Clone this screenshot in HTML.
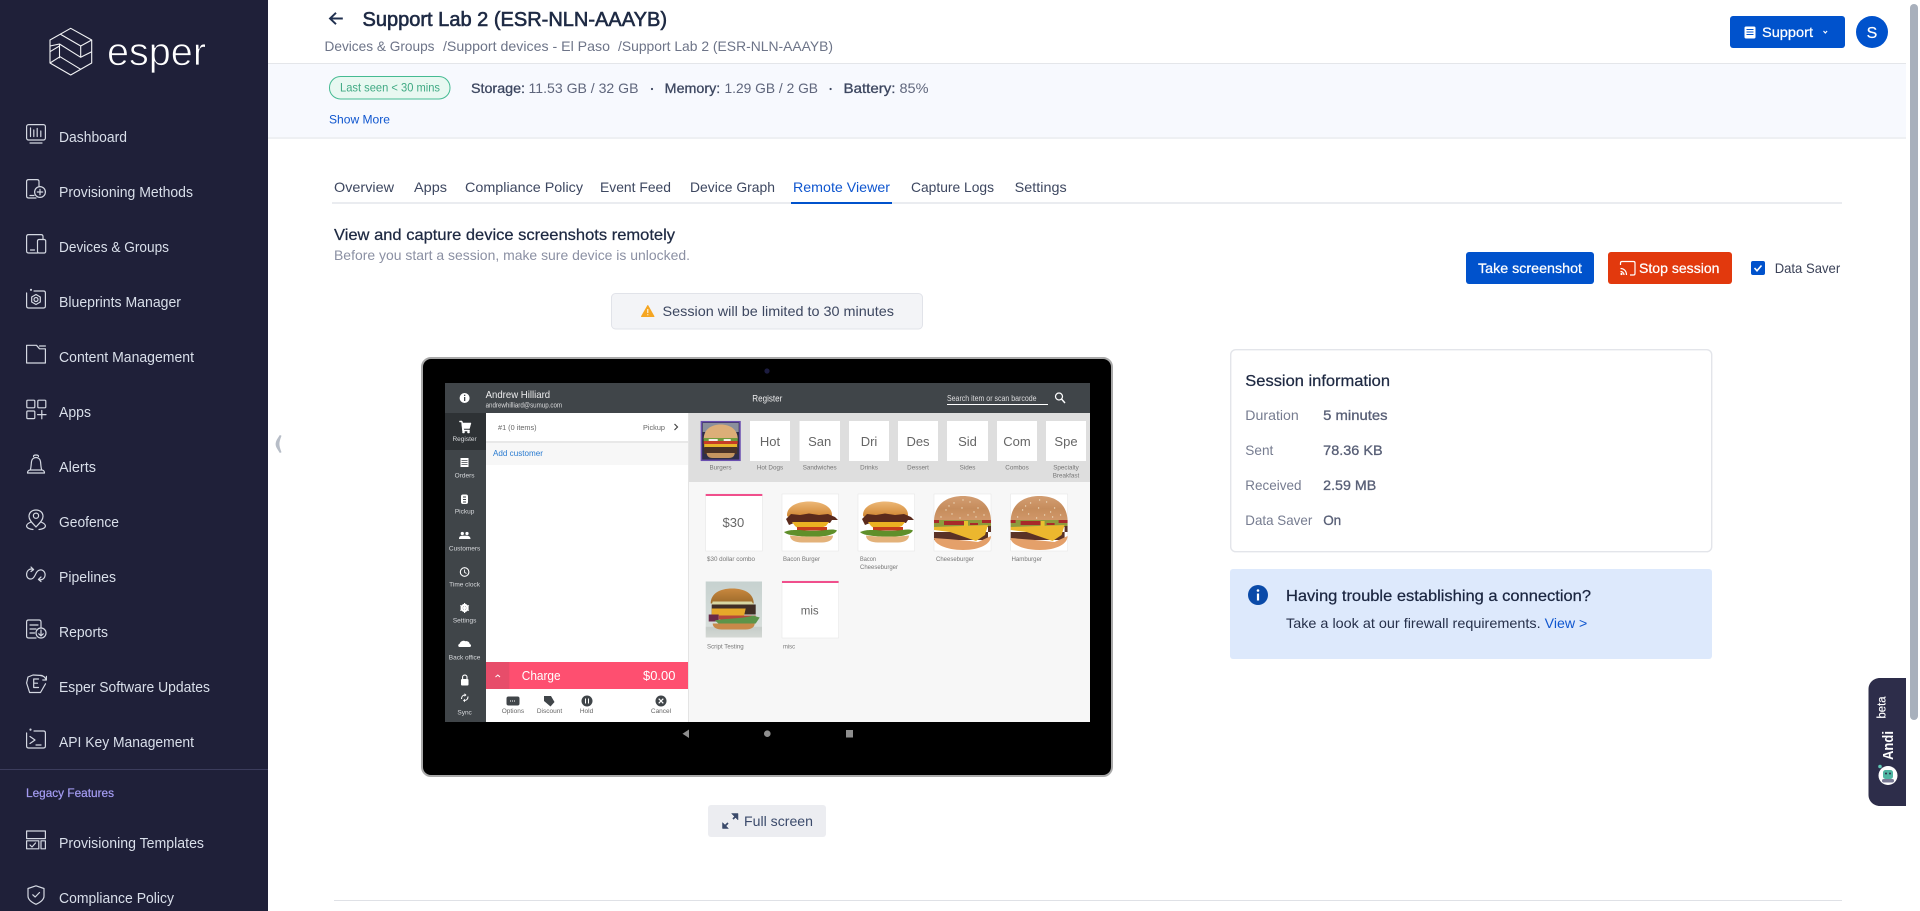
<!DOCTYPE html>
<html lang="en"><head><meta charset="utf-8"><title>Support Lab 2 - Remote Viewer</title>
<style>
html,body{margin:0;padding:0;background:#fff;width:1920px;height:911px;overflow:hidden}
svg{display:block}
text{font-family:"Liberation Sans",sans-serif;white-space:pre}
.nav{font-size:14.5px;fill:#d9dfea}
.ic{fill:none;stroke:#d4d8e2;stroke-width:1.2;stroke-linecap:round;stroke-linejoin:round}
.bc{font-size:14px;fill:#6d7488}
.tab{font-size:14px;fill:#3d4760}
.m{font-size:14px;fill:#3d4760;stroke:#3d4760;stroke-width:.3}
.r{font-size:14px;fill:#5f667c}
.lb{font-size:14px;fill:#767c90}
.v{font-size:14px;fill:#585f76;stroke:#585f76;stroke-width:.3}
.d{font-size:16px;fill:#1e2942;stroke:#1e2942;stroke-width:.25}
.w{fill:#fff;font-size:14px;stroke:#fff;stroke-width:.25}
.rl{font-size:6.5px;fill:#d8dadc;text-anchor:middle}
.ct{font-size:6.3px;fill:#777;text-anchor:middle}
.tt{font-size:13px;fill:#666;text-anchor:middle}
.cl{font-size:6.5px;fill:#777}
.bl{font-size:6.5px;fill:#666;text-anchor:middle}
</style></head><body>
<svg xmlns="http://www.w3.org/2000/svg" width="1920" height="911" viewBox="0 0 1920 911">
<defs>
<filter id="b" x="-2%" y="-2%" width="104%" height="104%"><feGaussianBlur stdDeviation="0.35"/></filter>
<linearGradient id="bun1" x1="0" y1="0" x2="0" y2="1"><stop offset="0" stop-color="#edb878"/><stop offset="1" stop-color="#cf8530"/></linearGradient>
<linearGradient id="bun2" x1="0" y1="0" x2="0" y2="1"><stop offset="0" stop-color="#d39e72"/><stop offset=".5" stop-color="#c58c5c"/><stop offset="1" stop-color="#d39a6c"/></linearGradient>
<linearGradient id="bun3" x1="0" y1="0" x2="0" y2="1"><stop offset="0" stop-color="#c9883e"/><stop offset="1" stop-color="#9c6a2a"/></linearGradient>
<linearGradient id="tb" x1="0" y1="0" x2="0" y2="1"><stop offset="0" stop-color="#c6d1cf"/><stop offset=".8" stop-color="#d7dedb"/><stop offset=".82" stop-color="#c6cdc9"/><stop offset="1" stop-color="#d4d8d4"/></linearGradient>
<symbol id="bacon" viewBox="0 0 57 57" width="57" height="57">
<path d="M5 21C5 12 16 7.5 27 7.5C39 7.5 50 12 50 21C50 22.500 49 23 47 23H8C6 23 5 22.500 5 21Z" fill="url(#bun1)"/>
<path d="M4 25L9 20L18 21L27 19.500L37 21L46 20L53 23L56 26L50 26L48 29L41 28L35 31L26 29L19 32L12 29L7 31L5 27Z" fill="#5a2a1c"/>
<path d="M10 28H47L44 32L36 35L24 34L17 35L13 32Z" fill="#ebb122"/>
<path d="M15 33H45V36.500H15Z" fill="#c53c1e"/>
<path d="M2 38C8 35.500 12 36 18 36C26 37 36 37 44 36C48 35.500 52 35 55 36.500C53 40 50 40 46 41.500C40 43 20 43 12 41.500C8 41 4 40 2 38Z" fill="#5f8f2c"/>
<path d="M8 41.500C18 43 40 43 51 41.500C51 46 46 48.500 40 48.500H20C13 48.500 8 46 8 41.500Z" fill="#e3b27a"/>
</symbol>
<symbol id="cheese" viewBox="0 0 57 57" width="57" height="57">
<path d="M0 28C0 10 13 2 29 2C45 2 57 10 57 28Z" fill="url(#bun2)"/>
<g fill="#ecd9bc"><circle cx="12" cy="16" r=".7"/><circle cx="20" cy="9" r=".7"/><circle cx="28" cy="14" r=".7"/><circle cx="36" cy="8" r=".7"/><circle cx="44" cy="14" r=".7"/><circle cx="50" cy="21" r=".7"/><circle cx="18" cy="20" r=".7"/><circle cx="34" cy="21" r=".7"/><circle cx="7" cy="23" r=".7"/><circle cx="26" cy="24" r=".7"/><circle cx="42" cy="23" r=".7"/><circle cx="15" cy="12" r=".7"/><circle cx="29" cy="6" r=".7"/><circle cx="40" cy="18" r=".7"/></g>
<path d="M0 26H57V33H0Z" fill="#8e9a3c"/><path d="M0 26H5V29H0ZM10 27H30V31H10ZM36 29H44V31H36ZM48 26H57V29H48Z" fill="#a82c2c"/><path d="M30 27H34V32H30Z" fill="#e9c02e"/>
<path d="M0 38H57V32L54 32V46H0Z" fill="#5a3328"/>
<path d="M0 33L54 31L51 41L42 47L16 38L0 36Z" fill="#ecb72d"/>
<path d="M0 44C12 45 28 46 44 48L57 42C57 50 46 56 29 56C12 56 0 50 0 44Z" fill="#e4a06a"/>
</symbol>
</defs>

<!-- main backgrounds -->
<rect width="1920" height="911" fill="#fff"/>
<rect x="268" y="63" width="1638" height="1.5" fill="#e4e6ea"/>
<rect x="268" y="64" width="1638" height="74" fill="#f7f9fe"/>
<rect x="268" y="137" width="1638" height="2" fill="#eef0f3"/>

<!-- sidebar -->
<rect width="268" height="911" fill="#1f2039"/>
<g fill="none" stroke="#f2f3f5" stroke-width="1.1" stroke-linejoin="round">
<path d="M70.7 28.3L91.7 40V63L70.7 75L50 63V40Z"/>
<path d="M60 34L80.7 46L91.7 40M80.7 46V57.3M50 46L59.5 44L80.7 57.3L91.7 51.7M50 51.7L59.5 46M59.5 44V58.3M50 63L60 56.7L80.7 69.3"/>
</g>
<text x="107" y="65" font-size="39" fill="#fff" stroke="#1f2039" stroke-width=".8" textLength="99" lengthAdjust="spacingAndGlyphs">esper</text>

<g class="nav">
<text x="59" y="142" textLength="68" lengthAdjust="spacingAndGlyphs">Dashboard</text>
<text x="59" y="197" textLength="134" lengthAdjust="spacingAndGlyphs">Provisioning Methods</text>
<text x="59" y="252" textLength="110" lengthAdjust="spacingAndGlyphs">Devices &amp; Groups</text>
<text x="59" y="307" textLength="122" lengthAdjust="spacingAndGlyphs">Blueprints Manager</text>
<text x="59" y="362" textLength="135" lengthAdjust="spacingAndGlyphs">Content Management</text>
<text x="59" y="417" textLength="32" lengthAdjust="spacingAndGlyphs">Apps</text>
<text x="59" y="472" textLength="37" lengthAdjust="spacingAndGlyphs">Alerts</text>
<text x="59" y="527" textLength="60" lengthAdjust="spacingAndGlyphs">Geofence</text>
<text x="59" y="582" textLength="57" lengthAdjust="spacingAndGlyphs">Pipelines</text>
<text x="59" y="637" textLength="49" lengthAdjust="spacingAndGlyphs">Reports</text>
<text x="59" y="692" textLength="151" lengthAdjust="spacingAndGlyphs">Esper Software Updates</text>
<text x="59" y="747" textLength="135" lengthAdjust="spacingAndGlyphs">API Key Management</text>
<text x="59" y="848" textLength="145" lengthAdjust="spacingAndGlyphs">Provisioning Templates</text>
<text x="59" y="903" textLength="115" lengthAdjust="spacingAndGlyphs">Compliance Policy</text>
</g>
<rect x="0" y="769" width="268" height="1" fill="#3b3c5c"/>
<text x="26" y="797" font-size="12" fill="#a59df3" stroke="#a59df3" stroke-width=".2" textLength="88" lengthAdjust="spacingAndGlyphs">Legacy Features</text>

<g class="ic">
<!-- dashboard -->
<rect x="26.6" y="124.6" width="18.8" height="15.4" rx="2"/><path d="M30.5 128V136.5M33.8 130V136.5M37.2 128.5V136.5M40.8 131V136.5M30 143H42"/>
<!-- provisioning -->
<path d="M39 186V181.5C39 180.4 38.2 179.6 37 179.6H28.6C27.4 179.6 26.6 180.4 26.6 181.5V196C26.6 197.2 27.4 198 28.6 198H36M30 179.6H35M30 195.5H34"/><circle cx="40" cy="192" r="5.4"/><path d="M40 189.3V194.7M37.3 192H42.7"/>
<!-- devices -->
<path d="M37.5 253H28.6C27.4 253 26.6 252.2 26.6 251V236.6C26.6 235.4 27.4 234.6 28.6 234.6H41C42.2 234.6 43 235.4 43 236.6V239.5"/><rect x="37.5" y="239.5" width="8.2" height="13.5" rx="1.5"/><path d="M30.5 250H34.5"/>
<!-- blueprints -->
<path d="M34 291H43.5C44.7 291 45.4 291.8 45.4 293V306C45.4 307.2 44.7 308 43.5 308H28.5C27.3 308 26.6 307.2 26.6 306V293"/><circle cx="36" cy="299.5" r="2"/><path d="M36 294.5L40.3 297V302L36 304.5L31.7 302V297Z"/><circle cx="31" cy="289.8" r=".5"/>
<!-- content -->
<path d="M26.6 345.3H36.5L39.5 348.8H45.4V363H26.6ZM39.5 346H45.4"/>
<!-- apps -->
<rect x="26.8" y="400.2" width="8" height="7.6" rx="1"/><rect x="37.8" y="400.2" width="8" height="7.6" rx="1"/><rect x="26.8" y="411" width="8" height="7.6" rx="1"/><path d="M41.8 410.5V418.8M37.6 414.6H46"/>
<!-- alerts -->
<path d="M30.3 470C31.2 467 31.2 463.5 31.5 461.500C31.8 459 33.8 457.5 36 457.5C38.2 457.5 40.2 459 40.5 461.5C40.8 463.5 40.8 467 41.7 470M27.500 473C27.500 471 29 470 30.3 470H41.7C43 470 44.500 471 44.500 473ZM33.5 456.5C33.5 454.5 38.5 454.5 38.5 456.5"/>
<!-- geofence -->
<path d="M36 527C33.5 524 29 520.5 29 516.5C29 512.5 32 510 36 510C40 510 43 512.5 43 516.5C43 520.5 38.5 524 36 527Z"/><circle cx="36" cy="515.7" r="2.6"/><path d="M31 522C28.5 523 26.6 524.5 26.6 526C26.6 528 30 529.3 33 529.5M41 522C43.5 523 45.4 524.5 45.4 526C45.4 528 42 529.3 39 529.5"/>
<!-- pipelines -->
<path d="M33 569.5C30 568 26.6 570.5 26.6 574.5C26.6 578 29.5 580 32.5 578.5C34.5 577.5 35.5 574 36.5 572.5C38 570 41 569.2 43 570.6C45.8 572.5 45.8 577 43 579C41.5 580 40 580 38.8 579.3M31 567L33.6 569.6L31 571.5M41 577L38.4 579.4L41 581.6"/>
<!-- reports -->
<path d="M36 638H28.6C27.4 638 26.6 637.2 26.6 636V622C26.6 620.8 27.4 620 28.6 620H39C40.2 620 41 620.8 41 622V627.6M30 625H38M30 629H36M30 633H34.5"/><circle cx="41" cy="633" r="5"/><path d="M41 630V635.8M38.8 633.8L41 636L43.2 633.8"/>
<!-- esper updates -->
<path d="M42 675.5L33 675L28 677L26.6 683L29.6 692.5H40.5L45.5 683.8"/><path d="M33.7 679H38.5M33.7 683.2H37.5M33.7 687.5H38.5M33.7 679V687.5"/><path d="M40.5 675.5C43 675.7 45 677 46 679.5M46.4 676.3V680H42.8"/>
<!-- api -->
<path d="M34 731H43.5C44.7 731 45.4 731.8 45.4 733V746C45.4 747.2 44.7 748 43.5 748H28.5C27.3 748 26.6 747.2 26.6 746V733"/><path d="M30 736.5L35 740L30 743.5M36 745H41"/><circle cx="30.5" cy="729.6" r=".5"/>
<!-- templates -->
<rect x="26.6" y="831" width="18.8" height="7.6"/><rect x="26.6" y="840.8" width="12.2" height="8"/><rect x="41" y="840.8" width="4.4" height="8"/><path d="M30 845L32 847L35.5 843"/>
<!-- compliance -->
<path d="M36 885.8L44 888.5V896C44 899.5 40 902.5 36 904.3C32 902.5 28 899.5 28 896V888.5Z"/><path d="M32.8 894.8L35.2 897L39.5 892.5"/>
</g>

<!-- collapse handle -->
<path d="M280 435.5C277 440 276 441.5 276 444C276 446.5 277 448 280 452.5L281 452C279.6 448.5 279 446.5 279 444C279 441.5 279.6 439.5 281 436Z" fill="#b7bdc7" stroke="#b7bdc7" stroke-width=".8"/>

<!-- header -->
<g fill="none" stroke="#20304f" stroke-width="1.9"><path d="M342.8 18.5H330.5M336 12.8L330 18.5L336 24.2"/></g>
<text x="362.5" y="26" font-size="20" fill="#1e2a44" stroke="#1e2a44" stroke-width=".6" textLength="304.5" lengthAdjust="spacingAndGlyphs">Support Lab 2 (ESR-NLN-AAAYB)</text>
<text x="324.5" y="51" class="bc" textLength="110" lengthAdjust="spacingAndGlyphs">Devices &amp; Groups</text>
<text x="443" y="51" class="bc" textLength="167" lengthAdjust="spacingAndGlyphs">/Support devices - El Paso</text>
<text x="618" y="51" class="bc" textLength="215" lengthAdjust="spacingAndGlyphs">/Support Lab 2 (ESR-NLN-AAAYB)</text>

<rect x="1730" y="16" width="115" height="32" rx="3" fill="#0052cc"/>
<rect x="1744.5" y="26.5" width="11" height="12" rx="1.5" fill="#fff"/><path d="M1746.5 29.5H1753.5M1746.5 32H1753.5M1746.5 34.5H1753.5" stroke="#0052cc" stroke-width="1"/>
<text x="1762" y="37" class="w" textLength="51" lengthAdjust="spacingAndGlyphs">Support</text>
<path d="M1823.5 31L1825.3 33L1827.1 31" fill="none" stroke="#fff" stroke-width="1.1"/>
<circle cx="1872" cy="32" r="16" fill="#0052cc"/>
<text x="1872" y="38" font-size="16" fill="#fff" text-anchor="middle" stroke="#fff" stroke-width=".2">S</text>

<!-- scrollbar -->
<rect x="1910" y="4" width="8" height="716" rx="4" fill="#a8b0bc"/>

<!-- status strip -->
<rect x="329.5" y="76.5" width="120.5" height="22.5" rx="11" fill="#e8f8f1" stroke="#45bb92" stroke-width="1"/>
<text x="340" y="91.5" font-size="12" fill="#3fa983" textLength="100" lengthAdjust="spacingAndGlyphs">Last seen &lt; 30 mins</text>
<text x="471" y="93" class="m" textLength="54" lengthAdjust="spacingAndGlyphs">Storage:</text>
<text x="528.5" y="93" class="r" textLength="110" lengthAdjust="spacingAndGlyphs">11.53 GB / 32 GB</text>
<circle cx="652" cy="89" r="1.1" fill="#3d4760"/>
<text x="664.7" y="93" class="m" textLength="55.5" lengthAdjust="spacingAndGlyphs">Memory:</text>
<text x="724.5" y="93" class="r" textLength="93.5" lengthAdjust="spacingAndGlyphs">1.29 GB / 2 GB</text>
<circle cx="830.6" cy="89" r="1.1" fill="#3d4760"/>
<text x="843.5" y="93" class="m" textLength="52" lengthAdjust="spacingAndGlyphs">Battery:</text>
<text x="899.5" y="93" class="r" textLength="29" lengthAdjust="spacingAndGlyphs">85%</text>
<text x="329" y="123.5" font-size="12" fill="#0f56cf" textLength="61" lengthAdjust="spacingAndGlyphs">Show More</text>

<!-- tabs -->
<text x="334" y="192" class="tab" textLength="60" lengthAdjust="spacingAndGlyphs">Overview</text>
<text x="414" y="192" class="tab" textLength="33" lengthAdjust="spacingAndGlyphs">Apps</text>
<text x="465" y="192" class="tab" textLength="118" lengthAdjust="spacingAndGlyphs">Compliance Policy</text>
<text x="600" y="192" class="tab" textLength="71" lengthAdjust="spacingAndGlyphs">Event Feed</text>
<text x="690" y="192" class="tab" textLength="85" lengthAdjust="spacingAndGlyphs">Device Graph</text>
<text x="793" y="192" class="tab" style="fill:#0f56cf" textLength="97" lengthAdjust="spacingAndGlyphs">Remote Viewer</text>
<text x="911" y="192" class="tab" textLength="83" lengthAdjust="spacingAndGlyphs">Capture Logs</text>
<text x="1014.7" y="192" class="tab" textLength="52" lengthAdjust="spacingAndGlyphs">Settings</text>
<rect x="332" y="202" width="1510" height="2" fill="#eaecf0"/>
<rect x="791" y="202" width="101" height="2" fill="#0052cc"/>

<!-- headings -->
<text x="334" y="240" class="d" textLength="341" lengthAdjust="spacingAndGlyphs">View and capture device screenshots remotely</text>
<text x="334" y="260" font-size="14" fill="#8b90a3" textLength="356" lengthAdjust="spacingAndGlyphs">Before you start a session, make sure device is unlocked.</text>

<!-- action buttons -->
<rect x="1466" y="252" width="128" height="32" rx="3" fill="#0052cc"/>
<text x="1478" y="273" class="w" textLength="104" lengthAdjust="spacingAndGlyphs">Take screenshot</text>
<rect x="1608" y="252" width="124" height="32" rx="3" fill="#e2390d"/>
<g fill="none" stroke="#fff" stroke-width="1.2"><path d="M1620.5 265V263C1620.5 262 1621 261.5 1622 261.5H1633.5C1634.5 261.5 1635 262 1635 263V273.5C1635 274.5 1634.5 275 1633.5 275H1630"/><path d="M1620.5 268.5C1624 268.5 1626.5 271 1626.5 275M1620.5 271.5C1622.5 271.5 1624 273 1624 275"/></g><circle cx="1621.5" cy="274" r="1.1" fill="#fff"/>
<text x="1639" y="273" class="w" textLength="80.5" lengthAdjust="spacingAndGlyphs">Stop session</text>
<rect x="1751" y="261" width="14" height="14" rx="2" fill="#0052cc"/>
<path d="M1754.5 268L1757 270.8L1761.5 265.5" fill="none" stroke="#fff" stroke-width="1.6"/>
<text x="1774.7" y="273" font-size="14" fill="#3b4258" textLength="65.5" lengthAdjust="spacingAndGlyphs">Data Saver</text>

<!-- warning -->
<rect x="611.5" y="293.5" width="311" height="35.5" rx="4" fill="#f3f4f7" stroke="#e1e3e9"/>
<path d="M647.8 305.5L654 316.5H641.5Z" fill="#f5a623" stroke="#f5a623" stroke-linejoin="round"/><path d="M647.8 309V313M647.8 314.3V315.3" stroke="#fff" stroke-width="1"/>
<text x="662.5" y="316" font-size="14" fill="#3d4760" textLength="231.5" lengthAdjust="spacingAndGlyphs">Session will be limited to 30 minutes</text>

<!-- tablet -->
<rect x="422" y="358" width="690" height="418" rx="9" fill="#000" stroke="#a9a9a9" stroke-width="2"/>
<g filter="url(#b)">
<circle cx="767" cy="371" r="2.6" fill="#1c1c40"/>
<path d="M689 729.5V738L682.5 733.7Z" fill="#8e8e8e"/>
<circle cx="767.3" cy="733.7" r="3.3" fill="#8e8e8e"/>
<rect x="846" y="730" width="7" height="7.5" fill="#8e8e8e"/>

<!-- app -->
<rect x="445" y="383" width="645" height="339" fill="#f7f7f7"/>
<rect x="445" y="383" width="645" height="30" fill="#3f444a"/>
<circle cx="464.6" cy="398" r="5" fill="#fff"/><rect x="464" y="397" width="1.3" height="4" fill="#3f444a"/><rect x="464" y="394.7" width="1.3" height="1.3" fill="#3f444a"/>
<text x="485.6" y="398" font-size="10.5" fill="#eee" textLength="64.5" lengthAdjust="spacingAndGlyphs">Andrew Hilliard</text>
<text x="485.6" y="407.5" font-size="7" fill="#ddd" textLength="76.5" lengthAdjust="spacingAndGlyphs">andrewhilliard@sumup.com</text>
<text x="767.3" y="401.5" font-size="9" fill="#eee" text-anchor="middle" textLength="30" lengthAdjust="spacingAndGlyphs">Register</text>
<text x="947" y="401" font-size="8" fill="#ddd" textLength="89.5" lengthAdjust="spacingAndGlyphs">Search item or scan barcode</text>
<rect x="947" y="404" width="101" height="1" fill="#fff"/>
<circle cx="1059" cy="396.5" r="3.5" fill="none" stroke="#fff" stroke-width="1.2"/><path d="M1061.5 399L1065 403" stroke="#fff" stroke-width="1.4"/>

<!-- rail -->
<rect x="445" y="413" width="41" height="309" fill="#3f444a"/>
<rect x="445" y="413" width="41" height="37" fill="#2e3236"/>
<path d="M459.5 421H462L462.8 423H471L469.5 428.5H463.5L464 430H469.5V431H462.5L461.5 422H459.5Z" fill="#fff" stroke="#fff" stroke-width=".5"/><circle cx="463.5" cy="432" r="1.3" fill="#fff"/><circle cx="468.5" cy="432" r="1.3" fill="#fff"/>
<text x="464.6" y="441" class="rl">Register</text>
<rect x="460.5" y="458" width="8" height="9" fill="#fff"/><path d="M461.5 460.5H467.5M461.5 462.5H467.5M461.5 464.5H467.5" stroke="#3f444a" stroke-width=".7"/>
<text x="464.6" y="477.5" class="rl">Orders</text>
<rect x="461" y="494.5" width="7" height="9.5" rx="2" fill="#fff"/><path d="M463 497H466M463 499.5H466M463 502H466" stroke="#3f444a" stroke-width=".9"/>
<text x="464.6" y="513.5" class="rl">Pickup</text>
<circle cx="462.3" cy="533.5" r="1.6" fill="#fff"/><circle cx="467" cy="533.5" r="1.6" fill="#fff"/><path d="M459 539C459 536 461 535.8 462.3 535.8C464 535.8 466 535.8 467 535.8C469 535.8 470.5 537 470.5 539Z" fill="#fff"/>
<text x="464.6" y="550.5" class="rl">Customers</text>
<circle cx="464.6" cy="572" r="4.3" fill="none" stroke="#fff" stroke-width="1.1"/><path d="M464.6 569.5V572.4L466.5 573.5" fill="none" stroke="#fff" stroke-width=".9"/>
<text x="464.6" y="586.5" class="rl">Time clock</text>
<circle cx="464.6" cy="608" r="3" fill="none" stroke="#fff" stroke-width="2.2"/><path d="M464.6 603V613M460.3 605.5L468.9 610.5M460.3 610.5L468.9 605.5" stroke="#fff" stroke-width="1.2"/>
<text x="464.6" y="622.5" class="rl">Settings</text>
<path d="M459.5 647C457.8 647 457.8 644 459.8 643.6C460.4 641.2 463.5 640 465.5 641.3C467 640.7 469.7 642 469.7 644C471.5 644.3 471.5 647 469.7 647Z" fill="#fff"/>
<text x="464.6" y="659.5" class="rl">Back office</text>
<rect x="461" y="679" width="7.5" height="6.5" rx="1" fill="#fff"/><path d="M462.6 679V677C462.6 674.4 467 674.4 467 677V679" fill="none" stroke="#fff" stroke-width="1.1"/>
<path d="M461.5 699C461.5 696.5 463 695 465 695M468 696.5C468 699 466.5 700.5 464.5 700.5" fill="none" stroke="#fff" stroke-width="1.1"/><path d="M464.5 693.3V696.7L466.5 695ZM465 698.8V702.2L463 700.5Z" fill="#fff"/>
<text x="464.6" y="714.5" class="rl">Sync</text>

<!-- middle panel -->
<rect x="486" y="413" width="202" height="309" fill="#fff"/>
<rect x="486" y="441" width="202" height="2" fill="#e8e8e8"/>
<rect x="486" y="443" width="202" height="22" fill="#f7f7f7"/>
<text x="498" y="430" font-size="7" fill="#666" textLength="38.6" lengthAdjust="spacingAndGlyphs">#1 (0 items)</text>
<text x="643" y="430" font-size="7.5" fill="#666" textLength="22" lengthAdjust="spacingAndGlyphs">Pickup</text>
<path d="M674.5 424L677.5 427L674.5 430" fill="none" stroke="#444" stroke-width="1.2"/>
<text x="493" y="456" font-size="8.5" fill="#2a7bd0" textLength="50" lengthAdjust="spacingAndGlyphs">Add customer</text>
<rect x="486" y="662" width="202" height="27" fill="#fe5070"/>
<rect x="486" y="662" width="23.3" height="27" fill="#e74d6b"/>
<path d="M495.5 677L497.8 675L500 677" fill="none" stroke="#fff" stroke-width="1"/>
<text x="521.8" y="680" font-size="12.5" fill="#fff" textLength="38.8" lengthAdjust="spacingAndGlyphs">Charge</text>
<text x="643" y="680" font-size="12.5" fill="#fff" textLength="32.4" lengthAdjust="spacingAndGlyphs">$0.00</text>
<rect x="506.5" y="696.5" width="13" height="9" rx="2" fill="#3f444a"/><path d="M510 701H516" stroke="#fff" stroke-width="1" stroke-dasharray="1 1"/>
<path d="M544 696L551 696L554.5 702L550.5 706.5L544 701Z" fill="#3f444a"/>
<circle cx="587" cy="701" r="5.5" fill="#3f444a"/><path d="M585.5 698.5V703.5M588.5 698.5V703.5" stroke="#fff" stroke-width="1"/>
<circle cx="661" cy="701" r="5.5" fill="#3f444a"/><path d="M658.7 698.7L663.3 703.3M663.3 698.7L658.7 703.3" stroke="#fff" stroke-width="1.2"/>
<text x="512.9" y="713" class="bl">Options</text><text x="549.5" y="713" class="bl">Discount</text><text x="586.5" y="713" class="bl">Hold</text><text x="661" y="713" class="bl">Cancel</text>
<rect x="688" y="413" width="1" height="309" fill="#e4e4e4"/>

<!-- categories -->
<rect x="689" y="413" width="401" height="69" fill="#dedede"/>
<g transform="translate(700.7 421)">
<rect x=".7" y=".7" width="38.6" height="38.6" fill="#2f2e48" stroke="#6a4fb0" stroke-width="1.5"/>
<rect x="2" y="2" width="36" height="9" fill="#8a8f9c"/>
<path d="M3 18C3 8 11 3.500 20 3.500C29 3.500 37 8 37 18Z" fill="#dcae78"/>
<path d="M3 17H37V20H3Z" fill="#6f9c3e"/><path d="M8 18H17V20H8ZM23 18H30V20H23Z" fill="#f2f2ea"/>
<path d="M3 20H37V23H3Z" fill="#c63d28"/>
<path d="M3.500 23H36.500V27L26 28L10 27H3.500Z" fill="#e9b52a"/>
<path d="M3.500 26H36.500V33H3.500Z" fill="#4a3228"/>
<path d="M6 32H34C34 35 32 37 28 37H12C8 37 6 35 6 32Z" fill="#c49560"/>
</g>
<g fill="#fff"><rect x="750" y="421" width="40" height="40"/><rect x="799.5" y="421" width="40.5" height="40"/><rect x="849" y="421" width="40" height="40"/><rect x="898" y="421" width="40" height="40"/><rect x="947" y="421" width="41" height="40"/><rect x="997" y="421" width="40" height="40"/><rect x="1046" y="421" width="40" height="40"/></g>
<text x="770" y="446" class="tt">Hot</text><text x="819.7" y="446" class="tt">San</text><text x="869" y="446" class="tt">Dri</text><text x="918" y="446" class="tt">Des</text><text x="967.5" y="446" class="tt">Sid</text><text x="1017" y="446" class="tt">Com</text><text x="1066" y="446" class="tt">Spe</text>
<text x="720.5" y="469.5" class="ct">Burgers</text><text x="770" y="469.5" class="ct">Hot Dogs</text><text x="819.7" y="469.5" class="ct">Sandwiches</text><text x="869" y="469.5" class="ct">Drinks</text><text x="918" y="469.5" class="ct">Dessert</text><text x="967.5" y="469.5" class="ct">Sides</text><text x="1017" y="469.5" class="ct">Combos</text><text x="1066" y="469.5" class="ct">Specialty</text><text x="1066" y="477.5" class="ct">Breakfast</text>

<!-- cards -->
<g fill="#fff" stroke="#e8e8e8" stroke-width=".6">
<rect x="705.7" y="494" width="56.6" height="57"/><rect x="782" y="494" width="56.6" height="57"/><rect x="858" y="494" width="56.6" height="57"/><rect x="782" y="581" width="56.6" height="57"/>
</g>
<rect x="705.7" y="494" width="56.6" height="2" fill="#f04f8c"/><rect x="782" y="581" width="56.6" height="2" fill="#f04f8c"/>
<text x="733.4" y="527" font-size="13" fill="#666" text-anchor="middle">$30</text>
<use href="#bacon" x="782" y="494"/><use href="#bacon" x="858" y="494"/>
<rect x="934" y="494" width="57" height="57" fill="#fff" stroke="#e8e8e8" stroke-width=".6"/><rect x="1010.600" y="494" width="57" height="57" fill="#fff" stroke="#e8e8e8" stroke-width=".6"/>
<use href="#cheese" x="934" y="494"/><use href="#cheese" x="1010.6" y="494"/>
<text x="809.7" y="614.5" font-size="11.5" fill="#666" text-anchor="middle">mis</text>
<g transform="translate(705.7 581.5)">
<rect width="56.3" height="56" fill="url(#tb)"/>
<path d="M5 22C5 12 14 7 26.500 7C39 7 48 12 48 22Z" fill="url(#bun3)"/>
<path d="M7 20H46L48 23H6Z" fill="#d8d6a2"/>
<path d="M6 23H50V33H6Z" fill="#3f2d28"/>
<path d="M6 27H40L38 36H22L6 33Z" fill="#e6a82c"/>
<path d="M3 33H13V40H3Z" fill="#6b2a4a"/>
<path d="M13 34H50V38H13Z" fill="#b54a3a"/>
<path d="M9 39C18 37 40 37 47 34L54 36L50 42L34 43H14Z" fill="#5c9448"/>
<path d="M7 42H49C49 46 45 48 40 48H16C11 48 7 46 7 42Z" fill="#c8894a"/>
</g>
<text x="707" y="561" class="cl" textLength="48" lengthAdjust="spacingAndGlyphs">$30 dollar combo</text>
<text x="783" y="561" class="cl" textLength="37" lengthAdjust="spacingAndGlyphs">Bacon Burger</text>
<text x="860" y="561" class="cl" textLength="16" lengthAdjust="spacingAndGlyphs">Bacon</text>
<text x="860" y="569" class="cl" textLength="38" lengthAdjust="spacingAndGlyphs">Cheeseburger</text>
<text x="936" y="561" class="cl" textLength="38" lengthAdjust="spacingAndGlyphs">Cheeseburger</text>
<text x="1011.5" y="561" class="cl" textLength="30.5" lengthAdjust="spacingAndGlyphs">Hamburger</text>
<text x="707" y="648.5" class="cl" textLength="36.7" lengthAdjust="spacingAndGlyphs">Script Testing</text>
<text x="783" y="648.5" class="cl" textLength="12" lengthAdjust="spacingAndGlyphs">misc</text>
</g>

<!-- full screen -->
<rect x="708" y="805" width="118" height="32" rx="3" fill="#ecedf1"/>
<g fill="#3b4a6b" stroke="#3b4a6b"><path d="M723 828L728 823M733 819L737.500 814.500" stroke-width="1.700" fill="none"/><path d="M722.500 822.500V828.500H728.500ZM731.500 813.500H738V820Z" stroke-width=".5"/></g>
<text x="744" y="826" font-size="14" fill="#3b4a6b" textLength="69" lengthAdjust="spacingAndGlyphs">Full screen</text>

<!-- session card -->
<rect x="1230.7" y="349.7" width="481" height="202" rx="5" fill="#fff" stroke="#e3e5ea" stroke-width="1.4"/>
<text x="1245.3" y="386" class="d" textLength="144.7" lengthAdjust="spacingAndGlyphs">Session information</text>
<text x="1245.3" y="420" class="lb" textLength="53.5" lengthAdjust="spacingAndGlyphs">Duration</text>
<text x="1323.2" y="420" class="v" textLength="64.3" lengthAdjust="spacingAndGlyphs">5 minutes</text>
<text x="1245.3" y="455" class="lb" textLength="28" lengthAdjust="spacingAndGlyphs">Sent</text>
<text x="1323.2" y="455" class="v" textLength="59.4" lengthAdjust="spacingAndGlyphs">78.36 KB</text>
<text x="1245.3" y="490" class="lb" textLength="56.2" lengthAdjust="spacingAndGlyphs">Received</text>
<text x="1323.2" y="490" class="v" textLength="53" lengthAdjust="spacingAndGlyphs">2.59 MB</text>
<text x="1245.3" y="525" class="lb" textLength="67" lengthAdjust="spacingAndGlyphs">Data Saver</text>
<text x="1323.2" y="525" class="v" textLength="18" lengthAdjust="spacingAndGlyphs">On</text>

<!-- help box -->
<rect x="1230" y="569" width="482" height="90" rx="3" fill="#dde9fc"/>
<circle cx="1258" cy="595" r="10" fill="#0a4aa8"/>
<rect x="1256.9" y="593.5" width="2.2" height="7" fill="#fff"/><circle cx="1258" cy="590.5" r="1.3" fill="#fff"/>
<text x="1286" y="601" class="d" style="fill:#1a2540" textLength="305" lengthAdjust="spacingAndGlyphs">Having trouble establishing a connection?</text>
<text x="1286" y="628" font-size="14" fill="#26304a" textLength="254.6" lengthAdjust="spacingAndGlyphs">Take a look at our firewall requirements.</text>
<text x="1544.7" y="628" font-size="14" fill="#0f56cf" textLength="42.6" lengthAdjust="spacingAndGlyphs">View &gt;</text>

<!-- Andi -->
<path d="M1906 678H1880C1873.5 678 1868.5 683 1868.5 689V795C1868.5 801 1873.5 806 1880 806H1906Z" fill="#2d2d4a"/>
<text transform="translate(1893 760) rotate(-90)" font-size="14.500" font-weight="700" fill="#fff" textLength="29" lengthAdjust="spacingAndGlyphs">Andi</text>
<text transform="translate(1885.500 718.5) rotate(-90)" font-size="11.500" fill="#fff" stroke="#fff" stroke-width=".15" textLength="22" lengthAdjust="spacingAndGlyphs">beta</text>
<circle cx="1888" cy="775.5" r="9.5" fill="#fff"/>
<rect x="1883" y="770" width="10" height="9" rx="2.500" fill="#4fb5a2"/>
<rect x="1882" y="779" width="12" height="3.500" rx="1.700" fill="#3f3f66" opacity=".7"/>
<circle cx="1886" cy="773.5" r="1" fill="#2d2d4a"/><circle cx="1890" cy="773.5" r="1" fill="#2d2d4a"/>
<circle cx="1880" cy="766.5" r="1.8" fill="#5fc7b5"/>

<!-- bottom rule -->
<rect x="334" y="900" width="1508" height="1" fill="#dfe1e6"/>
</svg>
</body></html>
